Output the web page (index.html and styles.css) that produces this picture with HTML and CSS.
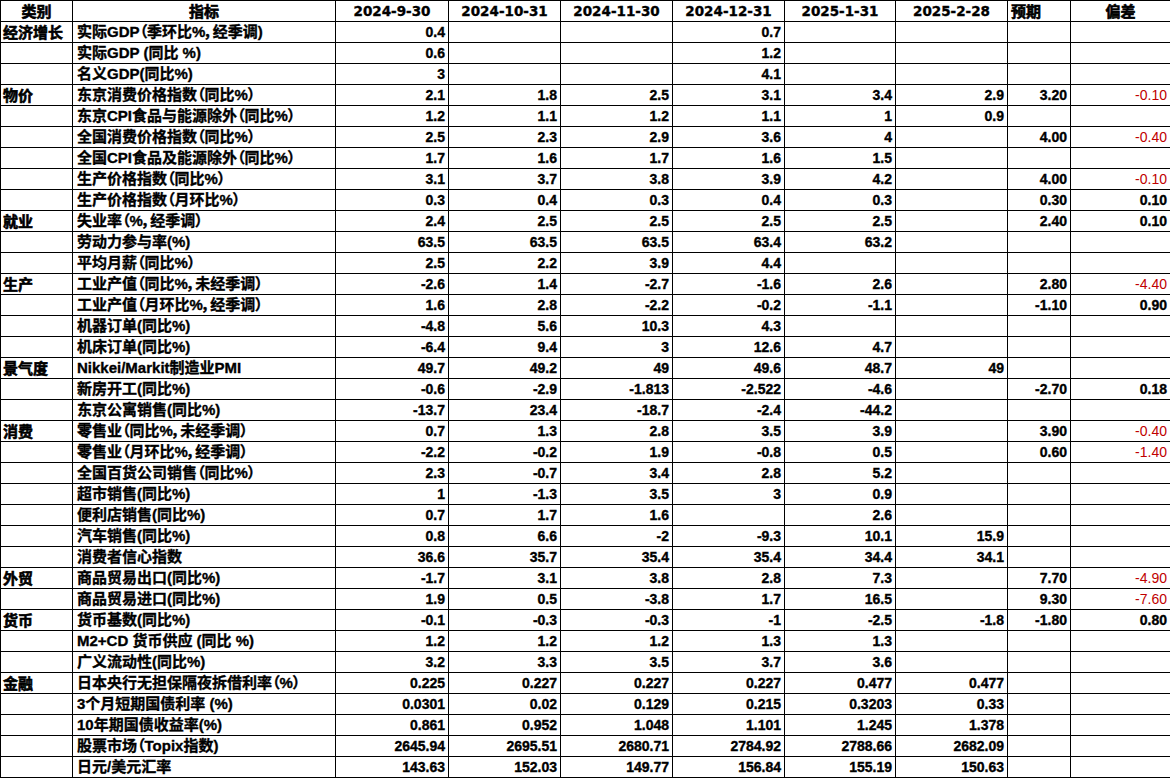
FILE: index.html
```html
<!DOCTYPE html>
<html lang="zh">
<head>
<meta charset="utf-8">
<title>日本经济数据</title>
<link rel="stylesheet" href="styles.css">
</head>
<body>
<table class="sheet">
<colgroup>
<col class="c-cat"><col class="c-name"><col class="c-d1"><col class="c-d"><col class="c-d"><col class="c-d"><col class="c-d7"><col class="c-d"><col class="c-exp"><col class="c-dev">
</colgroup>
<thead>
<tr><th class="h-cjk">类别</th><th class="h-cjk">指标</th><th>2024-9-30</th><th>2024-10-31</th><th>2024-11-30</th><th>2024-12-31</th><th>2025-1-31</th><th>2025-2-28</th><th class="h-cjk h-left">预期</th><th class="h-cjk">偏差</th></tr>
</thead>
<tbody>
<tr><td class="cat">经济增长</td><td class="name">实际GDP（季环比%，经季调)</td><td>0.4</td><td></td><td></td><td>0.7</td><td></td><td></td><td></td><td></td></tr>
<tr><td class="cat"></td><td class="name">实际GDP (同比 %)</td><td>0.6</td><td></td><td></td><td>1.2</td><td></td><td></td><td></td><td></td></tr>
<tr><td class="cat"></td><td class="name">名义GDP(同比%)</td><td>3</td><td></td><td></td><td>4.1</td><td></td><td></td><td></td><td></td></tr>
<tr><td class="cat">物价</td><td class="name">东京消费价格指数（同比%）</td><td>2.1</td><td>1.8</td><td>2.5</td><td>3.1</td><td>3.4</td><td>2.9</td><td>3.20</td><td class="neg">-0.10</td></tr>
<tr><td class="cat"></td><td class="name">东京CPI食品与能源除外（同比%）</td><td>1.2</td><td>1.1</td><td>1.2</td><td>1.1</td><td>1</td><td>0.9</td><td></td><td></td></tr>
<tr><td class="cat"></td><td class="name">全国消费价格指数（同比%）</td><td>2.5</td><td>2.3</td><td>2.9</td><td>3.6</td><td>4</td><td></td><td>4.00</td><td class="neg">-0.40</td></tr>
<tr><td class="cat"></td><td class="name">全国CPI食品及能源除外（同比%）</td><td>1.7</td><td>1.6</td><td>1.7</td><td>1.6</td><td>1.5</td><td></td><td></td><td></td></tr>
<tr><td class="cat"></td><td class="name">生产价格指数（同比%）</td><td>3.1</td><td>3.7</td><td>3.8</td><td>3.9</td><td>4.2</td><td></td><td>4.00</td><td class="neg">-0.10</td></tr>
<tr><td class="cat"></td><td class="name">生产价格指数（月环比%）</td><td>0.3</td><td>0.4</td><td>0.3</td><td>0.4</td><td>0.3</td><td></td><td>0.30</td><td>0.10</td></tr>
<tr><td class="cat">就业</td><td class="name">失业率（%，经季调）</td><td>2.4</td><td>2.5</td><td>2.5</td><td>2.5</td><td>2.5</td><td></td><td>2.40</td><td>0.10</td></tr>
<tr><td class="cat"></td><td class="name">劳动力参与率(%)</td><td>63.5</td><td>63.5</td><td>63.5</td><td>63.4</td><td>63.2</td><td></td><td></td><td></td></tr>
<tr><td class="cat"></td><td class="name">平均月薪（同比%）</td><td>2.5</td><td>2.2</td><td>3.9</td><td>4.4</td><td></td><td></td><td></td><td></td></tr>
<tr><td class="cat">生产</td><td class="name">工业产值（同比%，未经季调）</td><td>-2.6</td><td>1.4</td><td>-2.7</td><td>-1.6</td><td>2.6</td><td></td><td>2.80</td><td class="neg">-4.40</td></tr>
<tr><td class="cat"></td><td class="name">工业产值（月环比%，经季调）</td><td>1.6</td><td>2.8</td><td>-2.2</td><td>-0.2</td><td>-1.1</td><td></td><td>-1.10</td><td>0.90</td></tr>
<tr><td class="cat"></td><td class="name">机器订单(同比%)</td><td>-4.8</td><td>5.6</td><td>10.3</td><td>4.3</td><td></td><td></td><td></td><td></td></tr>
<tr><td class="cat"></td><td class="name">机床订单(同比%)</td><td>-6.4</td><td>9.4</td><td>3</td><td>12.6</td><td>4.7</td><td></td><td></td><td></td></tr>
<tr><td class="cat">景气度</td><td class="name">Nikkei/Markit制造业PMI</td><td>49.7</td><td>49.2</td><td>49</td><td>49.6</td><td>48.7</td><td>49</td><td></td><td></td></tr>
<tr><td class="cat"></td><td class="name">新房开工(同比%)</td><td>-0.6</td><td>-2.9</td><td>-1.813</td><td>-2.522</td><td>-4.6</td><td></td><td>-2.70</td><td>0.18</td></tr>
<tr><td class="cat"></td><td class="name">东京公寓销售(同比%)</td><td>-13.7</td><td>23.4</td><td>-18.7</td><td>-2.4</td><td>-44.2</td><td></td><td></td><td></td></tr>
<tr><td class="cat">消费</td><td class="name">零售业（同比%，未经季调）</td><td>0.7</td><td>1.3</td><td>2.8</td><td>3.5</td><td>3.9</td><td></td><td>3.90</td><td class="neg">-0.40</td></tr>
<tr><td class="cat"></td><td class="name">零售业（月环比%，经季调）</td><td>-2.2</td><td>-0.2</td><td>1.9</td><td>-0.8</td><td>0.5</td><td></td><td>0.60</td><td class="neg">-1.40</td></tr>
<tr><td class="cat"></td><td class="name">全国百货公司销售（同比%）</td><td>2.3</td><td>-0.7</td><td>3.4</td><td>2.8</td><td>5.2</td><td></td><td></td><td></td></tr>
<tr><td class="cat"></td><td class="name">超市销售(同比%)</td><td>1</td><td>-1.3</td><td>3.5</td><td>3</td><td>0.9</td><td></td><td></td><td></td></tr>
<tr><td class="cat"></td><td class="name">便利店销售(同比%)</td><td>0.7</td><td>1.7</td><td>1.6</td><td></td><td>2.6</td><td></td><td></td><td></td></tr>
<tr><td class="cat"></td><td class="name">汽车销售(同比%)</td><td>0.8</td><td>6.6</td><td>-2</td><td>-9.3</td><td>10.1</td><td>15.9</td><td></td><td></td></tr>
<tr><td class="cat"></td><td class="name">消费者信心指数</td><td>36.6</td><td>35.7</td><td>35.4</td><td>35.4</td><td>34.4</td><td>34.1</td><td></td><td></td></tr>
<tr><td class="cat">外贸</td><td class="name">商品贸易出口(同比%)</td><td>-1.7</td><td>3.1</td><td>3.8</td><td>2.8</td><td>7.3</td><td></td><td>7.70</td><td class="neg">-4.90</td></tr>
<tr><td class="cat"></td><td class="name">商品贸易进口(同比%)</td><td>1.9</td><td>0.5</td><td>-3.8</td><td>1.7</td><td>16.5</td><td></td><td>9.30</td><td class="neg">-7.60</td></tr>
<tr><td class="cat">货币</td><td class="name">货币基数(同比%)</td><td>-0.1</td><td>-0.3</td><td>-0.3</td><td>-1</td><td>-2.5</td><td>-1.8</td><td>-1.80</td><td>0.80</td></tr>
<tr><td class="cat"></td><td class="name">M2+CD 货币供应 (同比 %)</td><td>1.2</td><td>1.2</td><td>1.2</td><td>1.3</td><td>1.3</td><td></td><td></td><td></td></tr>
<tr><td class="cat"></td><td class="name">广义流动性(同比%)</td><td>3.2</td><td>3.3</td><td>3.5</td><td>3.7</td><td>3.6</td><td></td><td></td><td></td></tr>
<tr><td class="cat">金融</td><td class="name">日本央行无担保隔夜拆借利率（%）</td><td>0.225</td><td>0.227</td><td>0.227</td><td>0.227</td><td>0.477</td><td>0.477</td><td></td><td></td></tr>
<tr><td class="cat"></td><td class="name">3个月短期国债利率 (%)</td><td>0.0301</td><td>0.02</td><td>0.129</td><td>0.215</td><td>0.3203</td><td>0.33</td><td></td><td></td></tr>
<tr><td class="cat"></td><td class="name">10年期国债收益率(%)</td><td>0.861</td><td>0.952</td><td>1.048</td><td>1.101</td><td>1.245</td><td>1.378</td><td></td><td></td></tr>
<tr><td class="cat"></td><td class="name">股票市场（Topix指数)</td><td>2645.94</td><td>2695.51</td><td>2680.71</td><td>2784.92</td><td>2788.66</td><td>2682.09</td><td></td><td></td></tr>
<tr><td class="cat"></td><td class="name">日元/美元汇率</td><td>143.63</td><td>152.03</td><td>149.77</td><td>156.84</td><td>155.19</td><td>150.63</td><td></td><td></td></tr>
</tbody>
</table>
</body>
</html>
```

FILE: styles.css
```css
html, body {
  margin: 0;
  padding: 0;
  background: #ffffff;
}

.sheet {
  border-collapse: collapse;
  table-layout: fixed;
  width: 1170px;
  color: #000000;
  font-family: "Liberation Sans", "Noto Sans CJK SC", sans-serif;
  font-weight: bold;
}

.c-cat { width: 72px; }
.c-name { width: 263px; }
.c-d1 { width: 113px; }
.c-d { width: 112px; }
.c-d7 { width: 111px; }
.c-exp { width: 63px; }
.c-dev { width: 100px; }

.sheet th,
.sheet td {
  border: 1px solid #000000;
  height: 20px;
  padding: 0 3px;
  white-space: nowrap;
  overflow: hidden;
  line-height: 20px;
  -webkit-text-stroke: 0.35px #000000;
}

.sheet th {
  font-family: "DejaVu Sans", "Noto Sans CJK SC", sans-serif;
  font-size: 13.5px;
  text-align: center;
}

.sheet th.h-cjk {
  font-family: "Noto Sans CJK SC", sans-serif;
  font-size: 15px;
  -webkit-text-stroke: 0.6px #000000;
}

.sheet th.h-left {
  text-align: left;
}

.sheet td {
  font-size: 14px;
  text-align: right;
}

.sheet td.cat,
.sheet td.name {
  text-align: left;
  font-size: 15px;
}

.sheet td.cat {
  font-family: "Noto Sans CJK SC", sans-serif;
  padding-left: 2px;
  -webkit-text-stroke: 0.6px #000000;
}

.sheet td.name {
  padding-left: 4px;
  font-feature-settings: "palt";
}

.sheet td.neg {
  color: #c00000;
  font-weight: normal;
  -webkit-text-stroke: 0;
}
```
